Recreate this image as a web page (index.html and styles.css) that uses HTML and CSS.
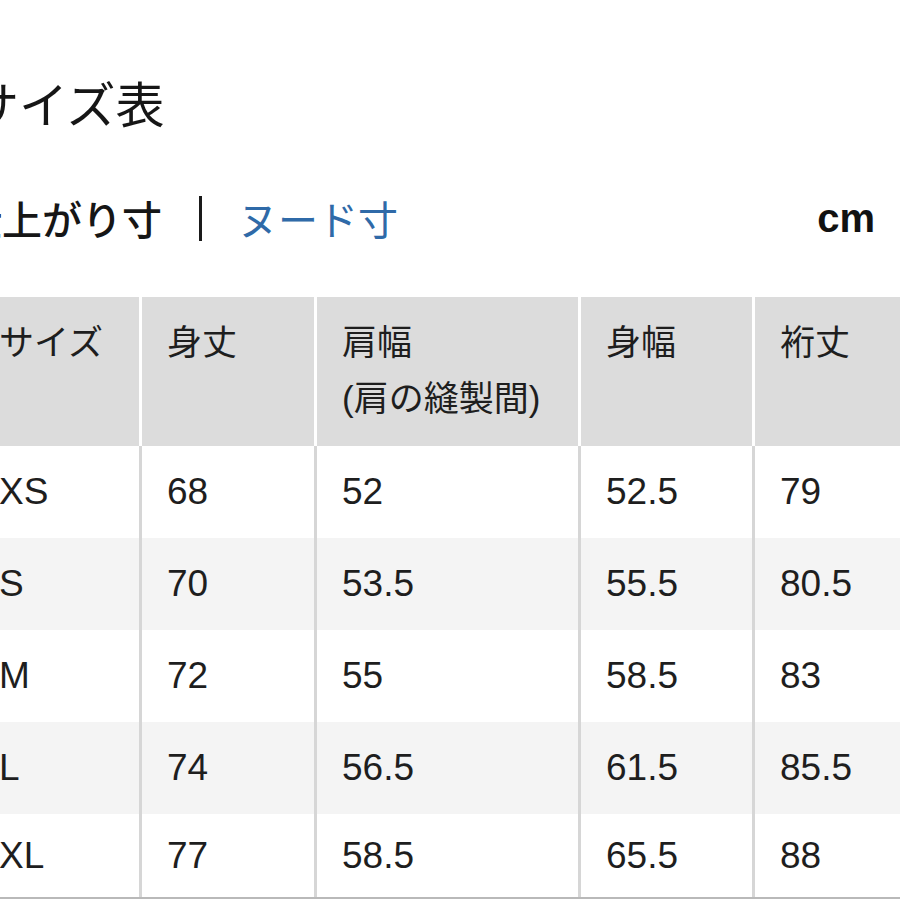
FILE: index.html
```html
<!DOCTYPE html>
<html lang="ja">
<head>
<meta charset="utf-8">
<title>サイズ表</title>
<link rel="stylesheet" href="styles.css">
</head>
<body>
<div class="page">
  <h1 class="title">サイズ表</h1>
  <div class="tabs">
    <div class="tab-group">
      <span class="tab tab-active">仕上がり寸</span>
      <span class="sep"></span>
      <span class="tab tab-link">ヌード寸</span>
    </div>
    <span class="unit">cm</span>
  </div>
  <div class="table">
    <div class="row head">
      <div class="cell">サイズ</div>
      <div class="cell">身丈</div>
      <div class="cell">肩幅<br>(肩の縫製間)</div>
      <div class="cell">身幅</div>
      <div class="cell">裄丈</div>
    </div>
    <div class="row">
      <div class="cell">XS</div><div class="cell">68</div><div class="cell">52</div><div class="cell">52.5</div><div class="cell">79</div>
    </div>
    <div class="row alt">
      <div class="cell">S</div><div class="cell">70</div><div class="cell">53.5</div><div class="cell">55.5</div><div class="cell">80.5</div>
    </div>
    <div class="row">
      <div class="cell">M</div><div class="cell">72</div><div class="cell">55</div><div class="cell">58.5</div><div class="cell">83</div>
    </div>
    <div class="row alt">
      <div class="cell">L</div><div class="cell">74</div><div class="cell">56.5</div><div class="cell">61.5</div><div class="cell">85.5</div>
    </div>
    <div class="row last">
      <div class="cell">XL</div><div class="cell">77</div><div class="cell">58.5</div><div class="cell">65.5</div><div class="cell">88</div>
    </div>
  </div>
</div>
</body>
</html>
```
FILE: styles.css
```css
html, body {
  margin: 0;
  padding: 0;
  background: #fff;
  overflow: hidden;
}
body {
  width: 900px;
  height: 900px;
  color: #161616;
  font-family: "Liberation Sans", "Noto Sans CJK JP", sans-serif;
}
.page {
  margin-left: -28px;
}
.title {
  margin: 0;
  padding-top: 72px;
  font-family: "Noto Sans CJK JP", sans-serif;
  font-weight: 400;
  font-size: 49px;
  line-height: 60px;
  margin-left: -2px;
}
.tabs {
  display: flex;
  align-items: center;
  justify-content: space-between;
  margin-top: 56px;
  height: 60px;
  padding-right: 25px;
}
.tab-group {
  display: flex;
  align-items: center;
  margin-left: -10px;
}
.tab {
  font-family: "Noto Sans CJK JP", sans-serif;
  font-size: 40px;
  line-height: 60px;
}
.tab-active {
  font-weight: 500;
  color: #161616;
}
.tab-link {
  color: #2f6aa8;
}
.sep {
  width: 3px;
  height: 45px;
  background: #1a1a1a;
  margin: 0 36px 0 37px;
}
.unit {
  font-weight: 700;
  font-size: 40px;
  line-height: 60px;
  color: #111;
}
.table {
  margin-top: 49px;
  margin-left: 2px;
}
.row {
  display: grid;
  grid-template-columns: 168px 175px 264px 174px 175px;
  height: 92px;
  font-size: 37px;
  color: #1e1e1e;
  background: #fff;
}
.row.alt {
  background: #f4f4f4;
}
.row.last {
  height: 83px;
  border-bottom: 2px solid #b9b9b9;
}
.cell {
  display: flex;
  align-items: center;
  padding-left: 25px;
  border-right: 3px solid #d6d6d6;
}
.row.head {
  height: 149px;
}
.head .cell {
  display: block;
  background: #dcdcdc;
  border-right: 3px solid #fff;
  font-family: "Liberation Sans", "Noto Sans CJK JP", sans-serif;
  font-size: 35px;
  line-height: 56px;
  padding-top: 18px;
}
```
